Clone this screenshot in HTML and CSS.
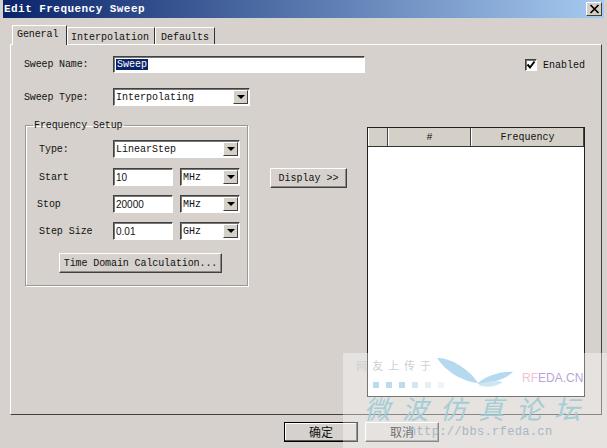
FILE: index.html
```html
<!DOCTYPE html>
<html lang="en">
<head>
<meta charset="utf-8">
<title>Edit Frequency Sweep</title>
<link rel="stylesheet" href="styles.css">
</head>
<body>
<div class="window">
  <header class="titlebar">
    <span class="title">Edit Frequency Sweep</span>
    <span class="close"><svg width="11" height="10" viewBox="0 0 11 10"><path d="M1.5 1 L9.5 9 M9.5 1 L1.5 9" stroke="#000" stroke-width="1.7" fill="none"/></svg></span>
  </header>
  <nav class="tabs">
    <span class="tab active">General</span>
    <span class="tab">Interpolation</span>
    <span class="tab">Defaults</span>
  </nav>
  <main class="panel">
    <section class="left">
      <div class="row row-name">
        <label class="label">Sweep Name:</label>
        <span class="field name-field"><span class="selected">Sweep</span></span>
      </div>
      <div class="row row-type">
        <label class="label">Sweep Type:</label>
        <span class="combo combo-type"><span class="combo-text">Interpolating</span><span class="drop"><i></i></span></span>
      </div>
      <div class="setup-row">
        <fieldset class="group">
          <legend class="legend">Frequency Setup</legend>
          <div class="grow grow-first">
            <label class="glabel">Type:</label>
            <span class="combo combo-wide"><span class="combo-text">LinearStep</span><span class="drop"><i></i></span></span>
          </div>
          <div class="grow grow-second">
            <label class="glabel">Start</label>
            <span class="field num">10</span>
            <span class="combo combo-unit"><span class="combo-text">MHz</span><span class="drop"><i></i></span></span>
          </div>
          <div class="grow">
            <label class="glabel glabel-out">Stop</label>
            <span class="field num">20000</span>
            <span class="combo combo-unit"><span class="combo-text">MHz</span><span class="drop"><i></i></span></span>
          </div>
          <div class="grow">
            <label class="glabel">Step Size</label>
            <span class="field num">0.01</span>
            <span class="combo combo-unit"><span class="combo-text">GHz</span><span class="drop"><i></i></span></span>
          </div>
          <div class="btn-row"><button class="btn btn-time">Time Domain Calculation...</button></div>
        </fieldset>
        <button class="btn btn-display">Display &gt;&gt;</button>
      </div>
    </section>
    <section class="right">
      <div class="enabled">
        <span class="check"><svg width="10" height="10" viewBox="0 0 10 10"><path d="M1.5 4.5 L4 7.5 L8.5 1.5" stroke="#000" stroke-width="2" fill="none"/></svg></span>
        <span>Enabled</span>
      </div>
      <div class="table">
        <div class="thead">
          <span class="th th-blank"></span>
          <span class="th th-num">#</span>
          <span class="th th-freq">Frequency</span>
        </div>
      </div>
    </section>
  </main>
  <footer class="footer">
    <button class="btn btn-ok">确定</button>
    <button class="btn btn-cancel">取消</button>
  </footer>
</div>
<aside class="watermark">
  <span class="wm-note">网友上传于</span>
  <svg class="wm-fly" width="90" height="36" viewBox="0 0 90 36">
    <path d="M1 4 C14 3 34 16 42 29 C28 28 10 18 1 4 Z" fill="#a9d3ec"/>
    <path d="M42 29 C52 21 66 17 77 18 C70 25 56 29 42 30 Z" fill="#a9d3ec"/>
    <path d="M42 31 C50 27 60 26 67 28 C60 33 50 34 42 31 Z" fill="#c4e2f2"/>
  </svg>
  <span class="wm-squares"><i></i><i></i><i></i><i></i><i></i><i></i></span>
  <span class="wm-brand"><span class="wm-rf">RF</span>EDA.CN</span>
  <span class="wm-cn">微波仿真论坛</span>
  <span class="wm-url">http://bbs.rfeda.cn</span>
</aside>
</body>
</html>
```
FILE: styles.css
```css
* { box-sizing: border-box; }
html, body { margin: 0; padding: 0; }
body {
  width: 607px;
  height: 448px;
  overflow: hidden;
  position: relative;
  background: #d6d1cc;
  font-family: "Liberation Mono", "Noto Sans CJK SC", monospace;
  font-size: 10px;
  color: #111;
}
.window {
  height: 448px;
  padding: 0 3px;
  display: flex;
  flex-direction: column;
}
.titlebar {
  height: 18px;
  flex: none;
  background: linear-gradient(90deg, #0a246a 0%, #a6caf0 100%);
  color: #fff;
  display: flex;
  align-items: center;
  justify-content: space-between;
  padding: 0 2px 0 1px;
}
.title {
  font-weight: bold;
  font-size: 11px;
  letter-spacing: 0.45px;
}
.close {
  width: 16px;
  height: 14px;
  background: #d4d0c8;
  border: 1px solid;
  border-color: #fff #404040 #404040 #fff;
  display: flex;
  align-items: center;
  justify-content: center;
}
.tabs {
  display: flex;
  height: 20px;
  margin-top: 6px;
  padding-left: 9px;
  flex: none;
  align-items: flex-end;
  position: relative;
  z-index: 1;
}
.tab {
  height: 17px;
  padding: 4px 2px 0 3px;
  border: 1px solid;
  border-color: #fff #333 transparent #fff;
  border-bottom: 0;
  white-space: nowrap;
}
.tab.active {
  height: 20px;
  width: 55px;
  padding: 3px 0 0 4px;
  letter-spacing: -0.1px;
  background: #d6d1cc;
  margin-bottom: -1px;
}
.tab:nth-child(2) { width: 88px; }
.tab:nth-child(3) { width: 60px; padding-left: 5px; }
.panel {
  width: 592px;
  height: 371px;
  margin-left: 7px;
  flex: none;
  border: 1px solid;
  border-color: #fff #404040 #404040 #fff;
  display: flex;
  position: relative;
}
.left { width: 356px; padding: 11px 0 0 13px; flex: none; }
.right { flex: none; width: 218px; padding-top: 14px; }
.row { display: flex; align-items: center; }
.row-name { height: 17px; }
.row-type { height: 18px; margin-top: 15px; }
.label { width: 89px; letter-spacing: -0.15px; flex: none; }
.field {
  background: #fff;
  border: 1px solid;
  border-color: #404040 #fff #fff #404040;
  box-shadow: inset 1px 1px 0 #777;
  display: flex;
  align-items: center;
  padding-left: 2px;
  font-size: 10px;
}
.name-field { width: 252px; height: 17px; }
.selected { background: #0a246a; color: #fff; padding: 0 1px; }
.combo {
  background: #fff;
  border: 1px solid;
  border-color: #404040 #fff #fff #404040;
  box-shadow: inset 1px 1px 0 #777;
  display: flex;
  align-items: center;
  justify-content: space-between;
  height: 18px;
  padding: 1px;
}
.combo-text { padding-left: 1px; }
.combo-type { width: 137px; }
.combo-wide { width: 127px; }
.combo-unit { width: 60px; margin-left: 7px; }
.drop {
  width: 15px;
  height: 14px;
  background: #d4d0c8;
  border: 1px solid;
  border-color: #fff #404040 #404040 #fff;
  display: flex;
  align-items: center;
  justify-content: center;
}
.drop i {
  width: 0;
  height: 0;
  border-left: 4px solid transparent;
  border-right: 4px solid transparent;
  border-top: 4px solid #000;
}
.setup-row { display: flex; align-items: flex-start; margin-top: 14px; margin-left: 1px; }
.group {
  width: 223px;
  height: 166px;
  margin: 0;
  padding: 0 0 0 13px;
  border: 1px solid #9a9a94;
  box-shadow: 1px 1px 0 #fff, inset 1px 1px 0 #fff;
  flex: none;
}
.legend { padding: 0 1px 0 1px; margin-left: -6px; letter-spacing: -0.1px; }
.grow { display: flex; align-items: center; height: 18px; margin-top: 9px; }
.grow-first { margin-top: 9px; }
.grow-second { margin-top: 10px; }
.glabel { width: 74px; flex: none; letter-spacing: -0.05px; }
.glabel-out { margin-left: -2px; width: 76px; }
.num { width: 60px; height: 18px; font-family: "Liberation Sans", sans-serif; }
.btn-row { margin-top: 13px; margin-left: 20px; }
.btn {
  font: inherit;
  color: inherit;
  background: #d6d1cc;
  border: 1px solid;
  border-color: #fff #404040 #404040 #fff;
  box-shadow: inset -1px -1px 0 #8a8a84;
  padding: 0;
}
.btn-time { width: 163px; height: 20px; letter-spacing: -0.1px; }
.btn-display { width: 77px; height: 20px; margin: 42px 0 0 22px; }
.setup-row .btn-display { margin-top: 48px; }
.enabled {
  display: flex;
  align-items: center;
  gap: 6px;
  height: 12px;
  margin-left: 158px;
}
.check {
  width: 12px;
  height: 12px;
  background: #fff;
  border: 1px solid;
  border-color: #404040 #fff #fff #404040;
  box-shadow: inset 1px 1px 0 #777;
  display: flex;
  align-items: center;
  justify-content: center;
}
.table {
  width: 218px;
  height: 270px;
  margin-top: 56px;
  background: #fff;
  border: 1px solid #222;
}
.thead { display: flex; height: 19px; background: #d4d0c8; border-bottom: 1px solid #333; }
.th {
  display: flex;
  align-items: center;
  justify-content: center;
  border-left: 1px solid #fff;
  border-right: 1px solid #444;
}
.th-blank { width: 20px; }
.th-num { width: 83px; }
.th-freq { flex: 1; }
.footer {
  display: flex;
  gap: 7px;
  padding: 7px 0 0 281px;
}
.footer .btn {
  width: 74px;
  height: 20px;
  font-family: "Noto Sans CJK SC", sans-serif;
  font-size: 12px;
  line-height: 1;
}
.btn-ok { border: 1px solid #000 !important; box-shadow: inset -1px -1px 0 #555, inset 1px 1px 0 #fff; }
.watermark {
  position: absolute;
  left: 343px;
  top: 353px;
  width: 264px;
  height: 95px;
  background: rgba(255, 255, 255, 0.38);
  overflow: hidden;
  pointer-events: none;
}
.wm-note, .wm-fly, .wm-squares, .wm-brand, .wm-cn, .wm-url { position: absolute; }
.wm-note {
  left: 13px;
  top: 4px;
  font-family: "Noto Sans CJK SC", sans-serif;
  font-size: 11px;
  letter-spacing: 5px;
  color: #cfcfcf;
}
.wm-fly { left: 93px; top: 1px; opacity: 0.85; }
.wm-squares { left: 30px; top: 29px; display: flex; gap: 7px; }
.wm-squares i { width: 6px; height: 6px; background: #bcdcec; }
.wm-squares i:nth-child(4) { background: #d6e6f0; }
.wm-squares i:nth-child(5) { background: #e6f0f4; }
.wm-squares i:nth-child(6) { background: #f0f4f6; }
.wm-brand {
  left: 179px;
  top: 18px;
  font-family: "Liberation Sans", sans-serif;
  font-size: 12px;
  color: #b9a4d6;
}
.wm-rf { color: #eec4d2; }
.wm-cn {
  left: 21px;
  top: 39px;
  font-family: "Noto Sans CJK SC", sans-serif;
  font-size: 26px;
  letter-spacing: 12px;
  font-style: italic;
  line-height: 1.2;
  color: #a4cdd6;
  white-space: nowrap;
}
.wm-url {
  left: 66px;
  top: 72px;
  font-family: "Liberation Mono", monospace;
  font-size: 12px;
  letter-spacing: 0.35px;
  color: #a6b8c4;
}
```
